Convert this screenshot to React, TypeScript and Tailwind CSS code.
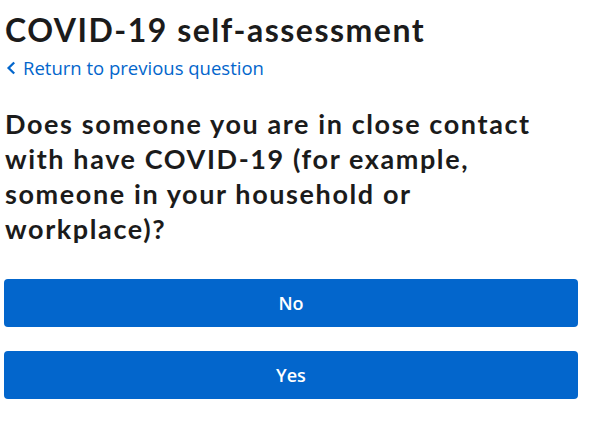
import React from "react";

export default function App() {
  return (
    <div className="bg-white w-[595px] h-[422px] pl-[5px] pt-[10px]">
      <h1 className="font-['Lato',sans-serif] font-bold text-[32px] leading-[40px] text-[#1b1b1b] tracking-[1.5px]">
        COVID-19 self-assessment
      </h1>
      <a href="#" className="mt-[6px] flex items-center gap-[7px] font-['Open_Sans',sans-serif] text-[18.5px] leading-[24px] text-[#0366cc]">
        <svg width="10" height="14" viewBox="0 0 10 14" className="ml-[1px]">
          <path d="M8.2 1.5 L2.6 7 L8.2 12.5" fill="none" stroke="#0366cc" strokeWidth="2.3" />
        </svg>
        Return to previous question
      </a>
      <h2 className="mt-[26px] font-['Lato',sans-serif] font-bold text-[27px] leading-[35px] text-[#1b1b1b] tracking-[1.6px]">
        Does someone you are in close contact
        <br />
        with have COVID-19 (for example,
        <br />
        someone in your household or
        <br />
        workplace)?
      </h2>
      <div className="mt-[33px] flex flex-col gap-[24px] w-[574px] -ml-[1px]">
        <button className="h-[48px] rounded-[4px] bg-[#0366cc] text-white font-['Open_Sans',sans-serif] font-semibold text-[18px]">
          No
        </button>
        <button className="h-[48px] rounded-[4px] bg-[#0366cc] text-white font-['Open_Sans',sans-serif] font-semibold text-[18px]">
          Yes
        </button>
      </div>
    </div>
  );
}
